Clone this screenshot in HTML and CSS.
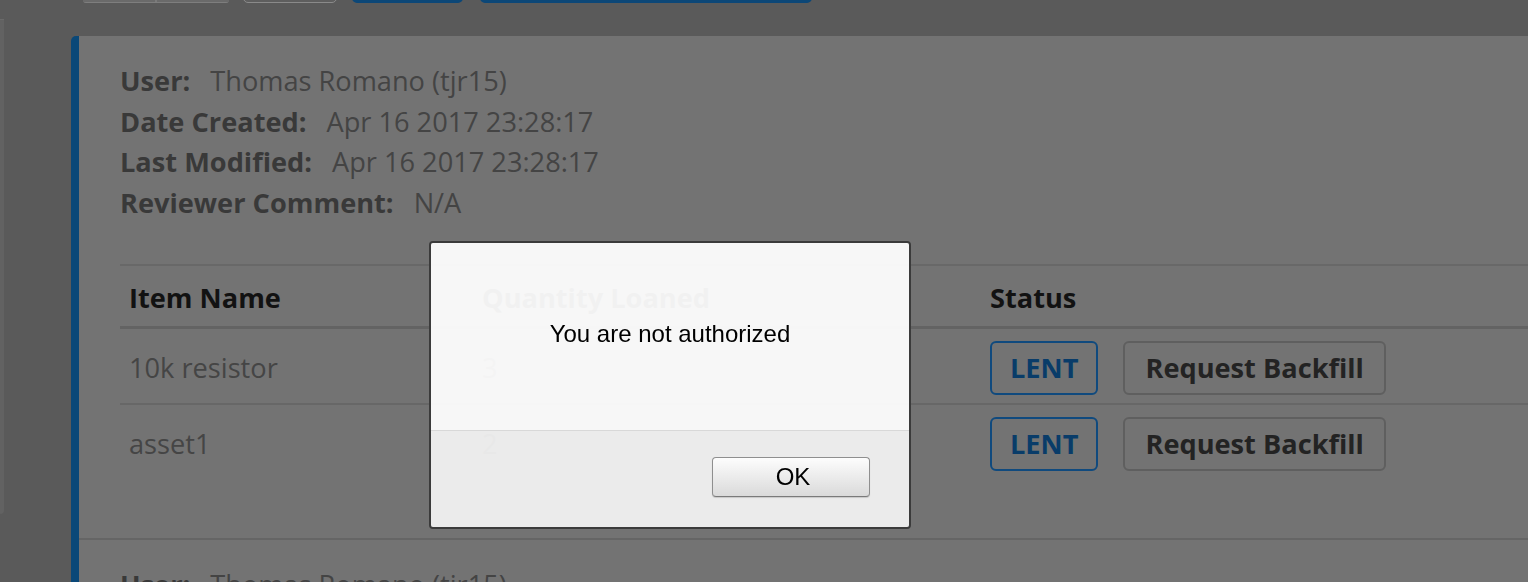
FILE: index.html
```html
<!DOCTYPE html>
<html lang="en">
<head>
<meta charset="utf-8">
<title>Loans</title>
<link rel="stylesheet" href="styles.css">
</head>
<body>
<div class="layout">
  <aside class="sidebar-edge"></aside>
  <main class="main">
    <div class="toolbar">
      <div class="btn-group"><span class="seg"></span><span class="seg"></span></div>
      <span class="tbtn light"></span>
      <span class="tbtn blue short"></span>
      <span class="tbtn blue long"></span>
    </div>
    <section class="card">
      <article class="request">
        <div class="meta">
          <div class="meta-row"><span class="label">User:</span><span class="value">Thomas Romano (tjr15)</span></div>
          <div class="meta-row"><span class="label">Date Created:</span><span class="value">Apr 16 2017 23:28:17</span></div>
          <div class="meta-row"><span class="label">Last Modified:</span><span class="value">Apr 16 2017 23:28:17</span></div>
          <div class="meta-row"><span class="label">Reviewer Comment:</span><span class="value">N/A</span></div>
        </div>
        <div class="items">
          <div class="row head">
            <div class="cell">Item Name</div>
            <div class="cell">Quantity Loaned</div>
            <div class="cell">Status</div>
          </div>
          <div class="row">
            <div class="cell">10k resistor</div>
            <div class="cell">3</div>
            <div class="cell status"><span class="badge">LENT</span><span class="action">Request Backfill</span></div>
          </div>
          <div class="row">
            <div class="cell">asset1</div>
            <div class="cell">2</div>
            <div class="cell status"><span class="badge">LENT</span><span class="action">Request Backfill</span></div>
          </div>
        </div>
      </article>
      <article class="request">
        <div class="meta">
          <div class="meta-row"><span class="label">User:</span><span class="value">Thomas Romano (tjr15)</span></div>
          <div class="meta-row"><span class="label">Date Created:</span><span class="value">Apr 16 2017 23:28:17</span></div>
        </div>
      </article>
    </section>
  </main>
</div>

<div class="dialog" role="alertdialog">
  <div class="dialog-body">
    <p class="dialog-msg">You are not authorized</p>
  </div>
  <div class="dialog-foot">
    <button class="ok-btn" type="button">OK</button>
  </div>
</div>
</body>
</html>
```

FILE: styles.css
```css
html, body {
  margin: 0;
  padding: 0;
}

body {
  background: #5a5a5a;
  height: 582px;
  overflow: hidden;
  font-family: "Open Sans", "DejaVu Sans", sans-serif;
}

.layout {
  display: flex;
  align-items: flex-start;
}

.sidebar-edge {
  flex: 0 0 4px;
  margin-top: 19px;
  height: 494px;
  background: #626262;
  border-top: 1px solid #6a6a6a;
  border-bottom-right-radius: 4px;
}

.main {
  flex: 1;
  padding-left: 67px;
  min-width: 0;
}

/* toolbar, mostly scrolled out of view */
.toolbar {
  display: flex;
  align-items: flex-end;
  height: 40px;
  margin-top: -37px;
  margin-left: 12px;
}

.btn-group {
  display: flex;
  width: 146px;
  height: 40px;
  gap: 2px;
  background: #7a7a7a;
  border-bottom: 1px solid #7e7e7e;
  border-radius: 0 0 3px 3px;
}

.seg {
  flex: 1;
  background: #6a6a6a;
}

.tbtn {
  display: block;
  height: 40px;
  border-radius: 5px;
  box-sizing: border-box;
}

.tbtn.light {
  width: 94px;
  margin-left: 14px;
  border: 1px solid #8a8a8a;
  background: #5e5e5e;
}

.tbtn.blue {
  background: #5c5c5c;
  border: 3px solid #0c4777;
  height: 39px;
}

.tbtn.short {
  width: 111px;
  margin-left: 15px;
}

.tbtn.long {
  width: 332px;
  margin-left: 17px;
}

/* card */
.card {
  margin-top: 33px;
  margin-right: -60px;
  background: #737373;
  border-left: 8px solid #0a4878;
  border-top-left-radius: 5px;
}

.request {
  padding: 25px 0 59px 41px;
  border-bottom: 2px solid #656565;
}

.meta {
  margin-bottom: 41px;
}

.meta-row {
  font-size: 27.2px;
  line-height: 40.5px;
  white-space: nowrap;
}

.label {
  font-weight: 700;
  color: #393939;
  margin-right: 20px;
}

.value {
  color: #444444;
}

/* items table */
.items {
  border-top: 2px solid #686868;
}

.row {
  display: grid;
  grid-template-columns: 353px 508px 1fr;
  border-bottom: 2px solid #676767;
  font-size: 27.2px;
}

.row:last-child {
  border-bottom: none;
}

.row.head {
  border-bottom: 3px solid #636363;
}

.cell {
  padding: 12px 9px 8px;
  line-height: 54px;
  color: #454545;
  white-space: nowrap;
}

.head .cell {
  padding: 3px 9px 0;
  line-height: 57px;
  font-weight: 700;
  color: #121212;
}

.status {
  display: flex;
  gap: 25px;
  align-items: center;
}

.badge,
.action {
  display: block;
  box-sizing: border-box;
  height: 54px;
  line-height: 50px;
  border-radius: 6px;
  font-weight: 700;
}

.badge {
  border: 2px solid #104a7e;
  color: #093c69;
  padding: 0 18px;
}

.action {
  border: 2px solid #5f5f5f;
  color: #232323;
  padding: 0 20px;
}

/* modal alert */
.dialog {
  position: fixed;
  left: 429px;
  top: 241px;
  width: 482px;
  height: 288px;
  box-sizing: border-box;
  border: 2px solid #3b3b3b;
  border-radius: 4px;
  overflow: hidden;
  display: flex;
  flex-direction: column;
  font-family: "Liberation Sans", Arial, sans-serif;
}

.dialog-body {
  height: 188px;
  background: rgba(255, 255, 255, 0.94);
  border-bottom: 1px solid rgba(214, 214, 214, 0.96);
  box-sizing: border-box;
  padding-top: 77px;
}

.dialog-msg {
  margin: 0;
  text-align: center;
  font-size: 24px;
  line-height: 28px;
  color: #000;
}

.dialog-foot {
  flex: 1;
  background: rgba(242, 242, 242, 0.94);
  display: flex;
  justify-content: flex-end;
  align-items: flex-start;
  padding: 26px 39px 0 0;
}

.ok-btn {
  width: 158px;
  height: 40px;
  box-sizing: border-box;
  border: 1px solid #8f8f8f;
  border-bottom-color: #7a7a7a;
  border-radius: 4px;
  background: linear-gradient(#fdfdfd, #dadada);
  box-shadow: 0 1px 1px rgba(0, 0, 0, 0.15);
  font-family: "Liberation Sans", Arial, sans-serif;
  font-size: 24px;
  padding: 0 0 0 4px;
  color: #000;
}
```
